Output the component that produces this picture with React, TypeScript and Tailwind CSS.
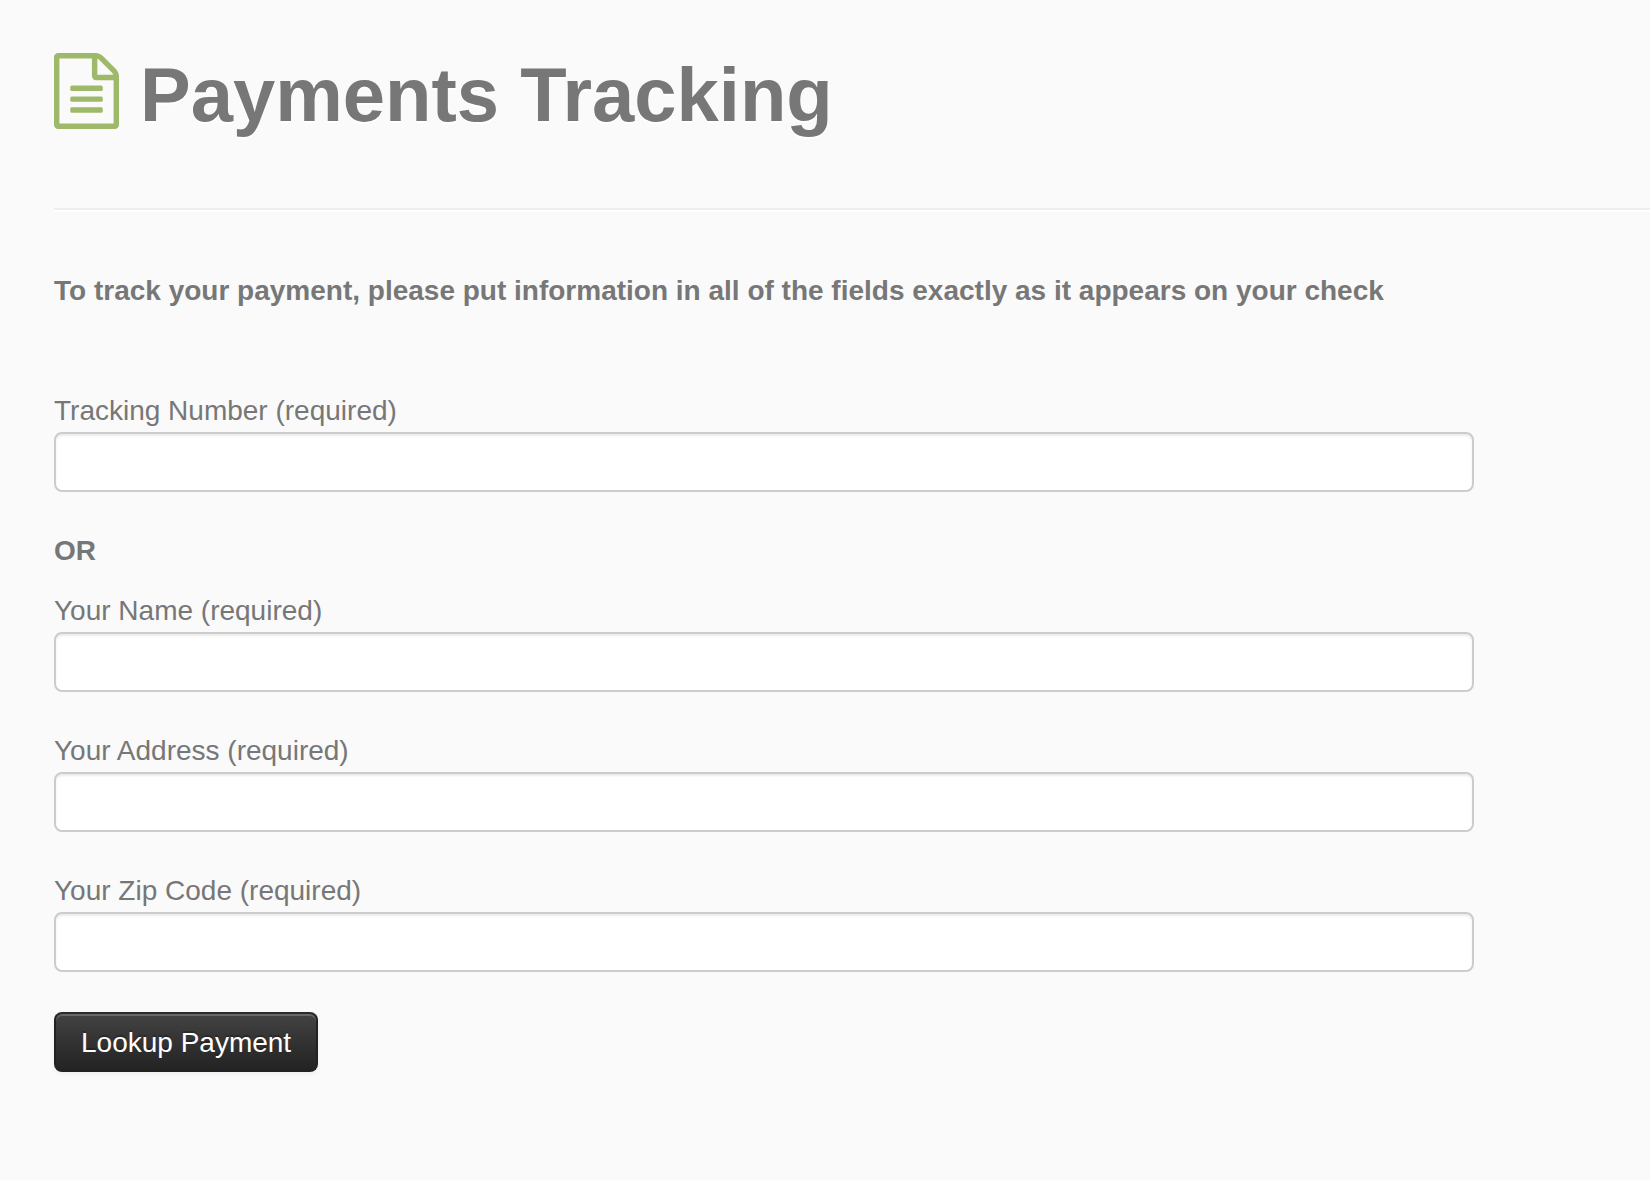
import type { FormEvent } from 'react';

interface FieldProps {
    id: string;
    label: string;
}

function Field({ id, label }: FieldProps) {
    return (
        <div className="mb-[38px]">
            <label htmlFor={id} className="block">
                {label}
            </label>
            <input
                id={id}
                name={id}
                type="text"
                className="block w-[89%] h-[60px] px-3 bg-white border-2 border-[#cccccc] rounded-lg shadow-[inset_0_2px_2px_rgba(0,0,0,0.075)] outline-none focus:border-[#9fb96a]"
            />
        </div>
    );
}

function FileTextIcon() {
    return (
        <svg viewBox="0 0 1536 1792" className="w-[65px] h-[76px] shrink-0" fill="#9fb96a" aria-hidden="true">
            <path d="M1468 380q28 28 48 76t20 88v1152q0 40-28 68t-68 28H96q-40 0-68-28t-28-68V96q0-40 28-68T96 0h896q40 0 88 20t76 48zM1024 136v376h376q-10-29-22-41l-313-313q-12-12-41-22zm384 1528V640H992q-40 0-68-28t-28-68V128H128v1536z" />
            <rect x="384" y="768" width="768" height="128" rx="36" />
            <rect x="384" y="1024" width="768" height="128" rx="36" />
            <rect x="384" y="1280" width="768" height="128" rx="36" />
        </svg>
    );
}

export default function App() {
    const handleSubmit = (e: FormEvent) => e.preventDefault();

    return (
        <div className="min-h-screen bg-[#fafafa] pl-[54px] pt-[53px] pb-10 font-['Liberation_Sans',Arial,sans-serif] text-[28px] leading-[42px] text-[#777777]">
            {/* Page title */}
            <header className="flex items-start gap-[21px] pb-[71px] border-b-2 border-[#eeeeee] shadow-[0_2px_0_#ffffff]">
                <FileTextIcon />
                <h1 className="text-[76px] leading-[84px] font-bold [text-shadow:0_2px_0_#ffffff]">Payments Tracking</h1>
            </header>

            <main className="pt-[60px]">
                <p className="mb-[78px] font-bold">
                    To track your payment, please put information in all of the fields exactly as it appears on your check
                </p>

                <form onSubmit={handleSubmit}>
                    <Field id="tracking-number" label="Tracking Number (required)" />
                    <p className="mb-[18px] font-bold">OR</p>
                    <Field id="your-name" label="Your Name (required)" />
                    <Field id="your-address" label="Your Address (required)" />
                    <Field id="your-zip" label="Your Zip Code (required)" />

                    <button
                        type="submit"
                        className="mt-0.5 h-[60px] px-[25px] pt-0.5 border-2 border-[#222222] border-t-[#2b2b2b] rounded-lg bg-linear-to-b from-[#444444] to-[#222222] bg-origin-border text-white [text-shadow:0_-2px_0_rgba(0,0,0,0.25)] shadow-[inset_0_2px_0_rgba(255,255,255,0.2),0_2px_4px_rgba(0,0,0,0.05)] cursor-pointer"
                    >
                        Lookup Payment
                    </button>
                </form>
            </main>
        </div>
    );
}
